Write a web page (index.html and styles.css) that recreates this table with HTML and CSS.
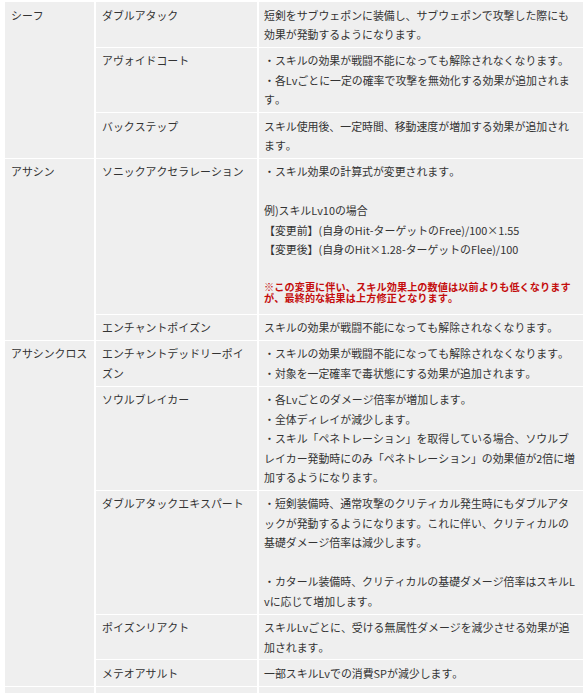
FILE: index.html
```html
<!DOCTYPE html>
<html lang="ja">
<head>
<meta charset="utf-8">
<title>スキル変更一覧</title>
<link rel="stylesheet" href="styles.css">
</head>
<body>
<div class="wrap">
<table class="skills">
<colgroup><col class="c1"><col class="c2"><col class="c3"></colgroup>
<tbody>
<tr class="cut"><td></td><td></td><td class="desc"></td></tr>
<tr>
<td class="job" rowspan="3">シーフ</td>
<td class="skill">ダブルアタック</td>
<td class="desc">短剣をサブウェポンに装備し、サブウェポンで攻撃した際にも効果が発動するようになります。</td>
</tr>
<tr>
<td class="skill">アヴォイドコート</td>
<td class="desc">・スキルの効果が戦闘不能になっても解除されなくなります。<br>・各Lvごとに一定の確率で攻撃を無効化する効果が追加されます。</td>
</tr>
<tr>
<td class="skill">バックステップ</td>
<td class="desc">スキル使用後、一定時間、移動速度が増加する効果が追加されます。</td>
</tr>
<tr>
<td class="job" rowspan="2">アサシン</td>
<td class="skill">ソニックアクセラレーション</td>
<td class="desc">・スキル効果の計算式が変更されます。<br><br>例)スキルLv10の場合<br>【変更前】(自身のHit-ターゲットのFree)/100×1.55<br>【変更後】(自身のHit×1.28-ターゲットのFlee)/100<br><br><div class="note">※この変更に伴い、スキル効果上の数値は以前よりも低くなりますが、最終的な結果は上方修正となります。</div></td>
</tr>
<tr>
<td class="skill">エンチャントポイズン</td>
<td class="desc">スキルの効果が戦闘不能になっても解除されなくなります。</td>
</tr>
<tr>
<td class="job" rowspan="5">アサシンクロス</td>
<td class="skill">エンチャントデッドリーポイズン</td>
<td class="desc">・スキルの効果が戦闘不能になっても解除されなくなります。<br>・対象を一定確率で毒状態にする効果が追加されます。</td>
</tr>
<tr>
<td class="skill">ソウルブレイカー</td>
<td class="desc">・各Lvごとのダメージ倍率が増加します。<br>・全体ディレイが減少します。<br>・スキル「ペネトレーション」を取得している場合、ソウルブレイカー発動時にのみ「ペネトレーション」の効果値が2倍に増加するようになります。</td>
</tr>
<tr>
<td class="skill">ダブルアタックエキスパート</td>
<td class="desc">・短剣装備時、通常攻撃のクリティカル発生時にもダブルアタックが発動するようになります。これに伴い、クリティカルの基礎ダメージ倍率は減少します。<br><br>・カタール装備時、クリティカルの基礎ダメージ倍率はスキルLvに応じて増加します。</td>
</tr>
<tr>
<td class="skill">ポイズンリアクト</td>
<td class="desc">スキルLvごとに、受ける無属性ダメージを減少させる効果が追加されます。</td>
</tr>
<tr>
<td class="skill">メテオアサルト</td>
<td class="desc">一部スキルLvでの消費SPが減少します。</td>
</tr>
<tr class="next"><td></td><td></td><td class="desc"></td></tr>
</tbody>
</table>
</div>
</body>
</html>
```

FILE: styles.css
```css
html, body {
  margin: 0;
  padding: 0;
  background: #ffffff;
}

body {
  font-family: "Noto Sans CJK JP", "Noto Sans", sans-serif;
  font-size: 10.9px;
  line-height: 19.5px;
  color: #333333;
  overflow: hidden;
  font-kerning: none;
  font-feature-settings: "kern" 0;
}

.wrap {
  padding-left: 5px;
}

.skills {
  border-collapse: separate;
  border-spacing: 0;
  table-layout: fixed;
  width: 578px;
}

.c1 { width: 91px; }
.c2 { width: 163px; }
.c3 { width: 324px; }

.skills td {
  box-sizing: border-box;
  background: #efefef;
  vertical-align: top;
  padding: 3.5px 6px 2.25px;
  border-bottom: 1px solid #ffffff;
  border-right: 2px solid #ffffff;
  word-break: break-all;
  text-spacing-trim: space-all;
}

.skills td.desc {
  border-right: 0;
  padding: 3.5px 4.5px 2.25px 5px;
}

.skills td.job {
  white-space: nowrap;
}

.skills tr.cut td {
  height: 1px;
  padding: 0;
  border-bottom-width: 2px;
}

.skills tr.next td {
  height: 30px;
  padding: 0;
}

.note {
  color: #c40d0d;
  font-weight: bold;
  font-size: 10.15px;
  letter-spacing: 0.1px;
  line-height: 11px;
  margin: 2px 0 8px;
}
```
